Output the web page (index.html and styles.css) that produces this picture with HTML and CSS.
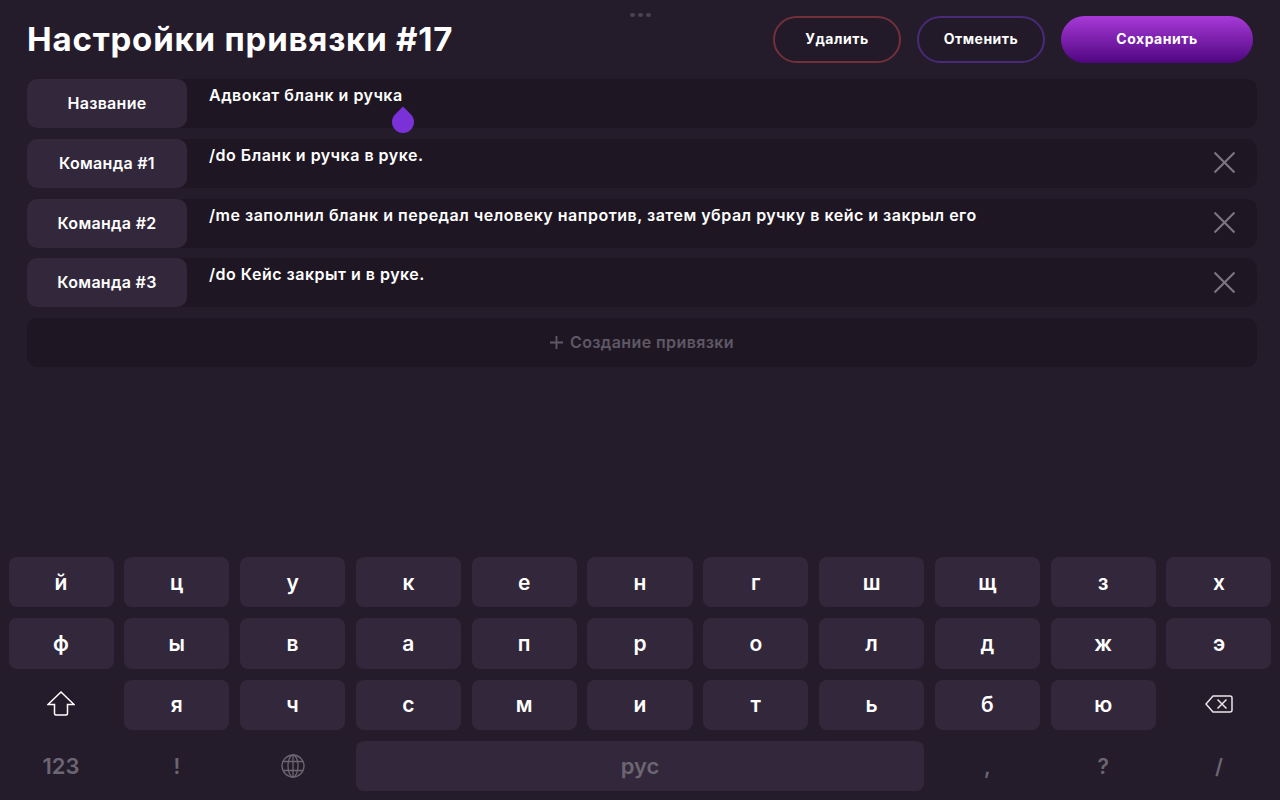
FILE: index.html
```html
<!DOCTYPE html>
<html lang="ru">
<head>
    <meta charset="UTF-8">
    <meta name="viewport" content="width=device-width, initial-scale=1.0">
    <title>Настройки привязки #17</title>
    <link rel="stylesheet" href="styles.css">
</head>

<body>
    <div class="screen">
        <div class="grabber"><span></span><span></span><span></span></div>

        <!-- Header -->
        <div class="header">
            <h1>Настройки привязки #17</h1>
            <div class="actions">
                <button class="btn btn-delete">Удалить</button>
                <button class="btn btn-cancel">Отменить</button>
                <button class="btn btn-save">Сохранить</button>
            </div>
        </div>

        <!-- Binding rows -->
        <div class="rows">
            <div class="row">
                <div class="row-label">Название</div>
                <div class="row-value">Адвокат бланк и ручка<span class="caret-handle"></span></div>
            </div>
            <div class="row">
                <div class="row-label">Команда #1</div>
                <div class="row-value">/do Бланк и ручка в руке.</div>
                <svg class="row-remove" viewBox="0 0 20 20"><path d="M0.5 0.5L19.500 19.500M19.500 0.5L0.5 19.500"/></svg>
            </div>
            <div class="row">
                <div class="row-label">Команда #2</div>
                <div class="row-value">/me заполнил бланк и передал человеку напротив, затем убрал ручку в кейс и закрыл его</div>
                <svg class="row-remove" viewBox="0 0 20 20"><path d="M0.5 0.5L19.500 19.500M19.500 0.5L0.5 19.500"/></svg>
            </div>
            <div class="row">
                <div class="row-label">Команда #3</div>
                <div class="row-value">/do Кейс закрыт и в руке.</div>
                <svg class="row-remove" viewBox="0 0 20 20"><path d="M0.5 0.5L19.500 19.500M19.500 0.5L0.5 19.500"/></svg>
            </div>
            <div class="row-add">
                <svg class="icon-plus" viewBox="0 0 14 14"><path d="M7 0V14M0 7H14"/></svg>
                Создание привязки
            </div>
        </div>

        <!-- Keyboard -->
        <div class="keyboard">
            <div class="key">й</div><div class="key">ц</div><div class="key">у</div><div class="key">к</div><div class="key">е</div><div class="key">н</div><div class="key">г</div><div class="key">ш</div><div class="key">щ</div><div class="key">з</div><div class="key">х</div>
            <div class="key">ф</div><div class="key">ы</div><div class="key">в</div><div class="key">а</div><div class="key">п</div><div class="key">р</div><div class="key">о</div><div class="key">л</div><div class="key">д</div><div class="key">ж</div><div class="key">э</div>
            <div class="key key-flat">
                <svg class="icon-shift" viewBox="0 0 28 25"><path d="M14 1L27 13.500H20.500V22.500Q20.500 24 19 24H9Q7.500 24 7.500 22.500V13.500H1Z"/></svg>
            </div>
            <div class="key">я</div><div class="key">ч</div><div class="key">с</div><div class="key">м</div><div class="key">и</div><div class="key">т</div><div class="key">ь</div><div class="key">б</div><div class="key">ю</div>
            <div class="key key-flat">
                <svg class="icon-backspace" viewBox="0 0 28 18"><path d="M8 1H25Q27 1 27 3V15Q27 17 25 17H8L1 9Z"/><path d="M12.500 4.500L21.500 13.500M21.500 4.500L12.500 13.500"/></svg>
            </div>
            <div class="key key-flat key-muted key-num">123</div>
            <div class="key key-flat key-muted">!</div>
            <div class="key key-flat key-muted">
                <svg class="icon-globe" viewBox="0 0 24 24"><circle cx="12" cy="12" r="11"/><ellipse cx="12" cy="12" rx="5" ry="11"/><path d="M12 1V23M2.200 7.500H21.800M2.200 16.500H21.800"/></svg>
            </div>
            <div class="key key-muted key-space">рус</div>
            <div class="key key-flat key-muted">,</div>
            <div class="key key-flat key-muted">?</div>
            <div class="key key-flat key-muted">/</div>
        </div>
    </div>
</body>

</html>
```

FILE: styles.css
```css
/* General Styles */
* {
    box-sizing: border-box;
}

body {
    font-family: Inter, "Noto Sans", sans-serif;
    margin: 0;
    padding: 0;
    background-color: #241c2b;
    color: #fff;
}

.screen {
    position: relative;
    display: flex;
    flex-direction: column;
    width: 1280px;
    height: 800px;
    overflow: hidden;
}

.grabber {
    position: absolute;
    top: 13px;
    left: 630px;
    display: flex;
    gap: 3px;
}

.grabber span {
    width: 5px;
    height: 4px;
    border-radius: 50%;
    background-color: #4a4350;
}

/* Header */
.header {
    display: flex;
    justify-content: space-between;
    align-items: center;
    height: 79px;
    padding: 0 27px 0 27px;
}

h1 {
    margin: 0 0 2px 0;
    font-size: 33px;
    font-weight: 700;
    letter-spacing: 0.8px;
}

.actions {
    display: flex;
    gap: 16px;
}

.btn {
    height: 47px;
    border-radius: 24px;
    border: 2px solid transparent;
    background: none;
    color: #fff;
    font-family: inherit;
    font-size: 14px;
    font-weight: 700;
    letter-spacing: 0.5px;
    padding: 0 0 2px 0;
}

.btn-delete {
    width: 128px;
    background-color: #221a28;
    border-color: #72303a;
}

.btn-cancel {
    width: 128px;
    background-color: #221a28;
    border-color: #4a2a78;
}

.btn-save {
    width: 192px;
    border: none;
    background: linear-gradient(to bottom, #a83ad8, #4f0680);
}

/* Rows */
.rows {
    display: flex;
    flex-direction: column;
    gap: 10.8px;
    padding: 0 23px 0 27px;
}

.row {
    display: flex;
    height: 49px;
    border-radius: 10px;
    background-color: #1e1723;
    align-items: flex-start;
}

.row-label {
    display: flex;
    justify-content: center;
    align-items: center;
    flex: 0 0 160px;
    height: 49px;
    padding-bottom: 1px;
    border-radius: 10px;
    background-color: #33283b;
    font-size: 16px;
    font-weight: 600;
    letter-spacing: 0.3px;
}

.row-value {
    position: relative;
    flex: 1;
    padding: 6px 0 0 22px;
    font-size: 16px;
    font-weight: 600;
    letter-spacing: 0.5px;
    line-height: 20px;
}

.caret-handle {
    position: absolute;
    top: 32px;
    left: 205px;
    width: 22px;
    height: 22px;
    border-radius: 50% 0 50% 50%;
    background-color: #7a31d8;
    transform: rotate(-45deg);
}

.row-remove {
    flex: 0 0 21px;
    width: 21px;
    height: 21px;
    margin: 13.5px 22px 0 0;
    fill: none;
    stroke: #7d7585;
    stroke-width: 2;
}

.row-add {
    display: flex;
    justify-content: center;
    align-items: center;
    gap: 7px;
    height: 49px;
    padding-bottom: 1px;
    border-radius: 10px;
    background-color: #1e1723;
    color: #5f5866;
    font-size: 16px;
    font-weight: 600;
    letter-spacing: 0.4px;
}

.icon-plus {
    width: 13px;
    height: 13px;
    fill: none;
    stroke: #5f5866;
    stroke-width: 2;
}

/* Keyboard */
.keyboard {
    display: grid;
    grid-template-columns: repeat(11, 1fr);
    grid-auto-rows: 50.5px;
    column-gap: 10.8px;
    row-gap: 10.8px;
    margin-top: auto;
    padding: 0 8.5px 8.7px 8.5px;
}

.key {
    display: flex;
    justify-content: center;
    align-items: center;
    border-radius: 8px;
    background-color: #33283b;
    font-size: 21px;
    font-weight: 600;
}

.key-flat {
    background: none;
}

.key-muted {
    color: #6c6572;
}

.key-num {
    font-size: 22px;
}

.key-space {
    grid-column: span 5;
    font-size: 22px;
}

.icon-shift {
    width: 28px;
    height: 25px;
    margin-bottom: 2px;
    fill: none;
    stroke: #fff;
    stroke-width: 1.500;
}

.icon-backspace {
    width: 28px;
    height: 18px;
    margin-bottom: 1px;
    fill: none;
    stroke: #e8e6ea;
    stroke-width: 1.500;
}

.icon-globe {
    width: 24px;
    height: 24px;
    fill: none;
    stroke: #6c6572;
    stroke-width: 1.300;
}
```
